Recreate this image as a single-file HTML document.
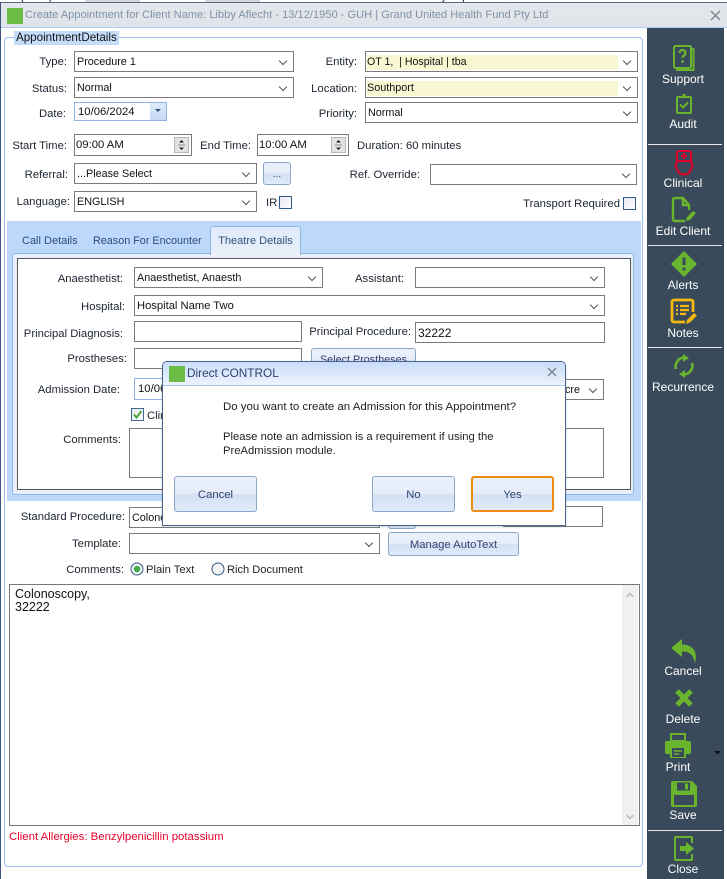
<!DOCTYPE html>
<html><head><meta charset="utf-8"><style>
html,body{margin:0;padding:0;background:#fff}
body{position:relative;width:727px;height:879px;overflow:hidden;font-family:"Liberation Sans",sans-serif;font-size:11.3px;color:#1c2430}
div,span{position:absolute;box-sizing:border-box;white-space:nowrap}
svg{position:absolute;overflow:visible}
.l{text-align:right;line-height:14px;height:14px;transform:translateY(1px)}
.t{line-height:14px;transform:translateY(1px)}
.f{border:1px solid #7a7a7a;background:#fff;line-height:21px;padding-left:2px;color:#111;font-size:10.8px}
.c::after{content:"";position:absolute;right:7px;top:6px;width:5px;height:5px;border-right:1px solid #555;border-bottom:1px solid #555;transform:rotate(45deg)}
.b{border:1px solid #8aa6c8;border-radius:3px;background:linear-gradient(#eaf1fb 0,#e6eefa 48%,#d3e1f4 52%,#dfeafa 100%);text-align:center;color:#33406f}
.s{width:80px;text-align:center;color:#fff;font-size:12px;line-height:14px;left:643px}
.sep{left:648px;width:74px;height:1px;background:#e8e8e8}
.y{background:#f9f7d2;position:absolute;left:1px;top:3px;height:15px;width:251px}
.cb{width:13px;height:13px;border:1px solid #2f5a8c;background:linear-gradient(135deg,#e6e9ee,#fff)}
</style></head><body>
<!-- behind window -->
<div style="left:0;top:0;width:727px;height:3px;background:#fff;overflow:hidden">
<span style="left:2px;top:-9px;font-size:11px;line-height:13px;color:#222">ate (2898)</span>
<span style="left:85px;top:0;width:55px;height:3px;background:#d8d8d8"></span>
<span style="left:205px;top:0;width:55px;height:3px;background:#d8d8d8"></span>
<span style="left:415px;top:-9px;font-size:11px;line-height:13px;color:#222">List by Lapsch / Client</span>
</div>
<div style="left:0;top:2px;width:1px;height:877px;background:#3f5580"></div>
<div style="left:1px;top:2px;width:726px;height:1px;background:#59698c"></div>
<!-- title -->
<div style="left:1px;top:3px;width:726px;height:25px;background:linear-gradient(#e4e8ec,#dfe4ea);border-bottom:1px solid #b4cdee"></div>
<div style="left:7px;top:8px;width:16px;height:16px;background:#6cbd45"></div>
<div style="left:25px;top:8px;color:#8092a8;font-size:11.1px;line-height:15px">Create Appointment for Client Name: Libby Aflecht - 13/12/1950 - GUH | Grand United Health Fund Pty Ltd</div>
<svg style="left:711px;top:11px" width="9" height="9"><path d="M0 0L9 9M9 0L0 9" stroke="#7f8790" stroke-width="1.5"/></svg>
<!-- group -->
<div style="left:4px;top:37px;width:639px;height:830px;border:1px solid #9cbfee;border-radius:4px"></div>
<div style="left:14px;top:31px;width:105px;height:14px;background:#c3dcfa;color:#111;line-height:14px;padding-left:2px;font-size:11.6px;word-spacing:-3px">Appointment Details</div>
<!-- left fields -->
<div class="l" style="right:660px;top:54px">Type:</div>
<div class="f c" style="left:74px;top:51px;width:220px;height:21px">Procedure 1</div>
<div class="l" style="right:660px;top:81px">Status:</div>
<div class="f c" style="left:74px;top:77px;width:220px;height:21px">Normal</div>
<div class="l" style="right:661px;top:106px">Date:</div>
<div class="f" style="left:74px;top:102px;width:93px;height:19px;border-color:#8db4e8;padding-left:3px;line-height:18px;font-size:11.3px">10/06/2024</div>
<div style="left:150px;top:103px;width:16px;height:17px;background:linear-gradient(#dfeafa,#c5d9f5)"></div>
<svg style="left:155px;top:109px" width="6" height="4"><path d="M0 0H6L3 3Z" fill="#33507c"/></svg>
<div class="l" style="right:660px;top:138px">Start Time:</div>
<div class="f" style="left:74px;top:134px;width:118px;height:22px;padding-left:1px;font-size:11.3px">09:00 AM</div>
<div style="left:174px;top:137px;width:15px;height:16px;background:#e3e3e3;border:1px solid #b8b8b8"></div>
<svg style="left:178px;top:139px" width="8" height="12"><path d="M1 3.500L3.500 1L6 3.500ZM1 8.500L3.500 11L6 8.500Z" fill="#222"/><path d="M0 6H7" stroke="#888"/></svg>
<div class="l" style="right:476px;top:138px">End Time:</div>
<div class="f" style="left:257px;top:134px;width:92px;height:22px;padding-left:1px;font-size:11.3px">10:00 AM</div>
<div style="left:331px;top:137px;width:15px;height:16px;background:#e3e3e3;border:1px solid #b8b8b8"></div>
<svg style="left:335px;top:139px" width="8" height="12"><path d="M1 3.500L3.500 1L6 3.500ZM1 8.500L3.500 11L6 8.500Z" fill="#222"/><path d="M0 6H7" stroke="#888"/></svg>
<div class="t" style="left:357px;top:138px">Duration: 60 minutes</div>
<div class="l" style="right:659px;top:167px">Referral:</div>
<div class="f c" style="left:74px;top:163px;width:183px;height:21px">...Please Select</div>
<div class="b" style="left:263px;top:162px;width:28px;height:23px;line-height:24px;font-size:10px">...</div>
<div class="l" style="right:657px;top:194px">Language:</div>
<div class="f c" style="left:74px;top:191px;width:183px;height:21px">ENGLISH</div>
<div class="t" style="left:266px;top:195px">IR</div>
<div class="cb" style="left:279px;top:196px"></div>
<!-- right fields -->
<div class="l" style="right:370px;top:54px">Entity:</div>
<div class="f c" style="left:365px;top:51px;width:273px;height:21px"><span class="y"></span><span style="left:1px;top:0;font-size:10.6px">OT 1,&nbsp; | Hospital | tba</span></div>
<div class="l" style="right:370px;top:81px">Location:</div>
<div class="f c" style="left:365px;top:77px;width:273px;height:21px"><span class="y"></span><span style="left:1px;top:0">Southport</span></div>
<div class="l" style="right:370px;top:106px">Priority:</div>
<div class="f c" style="left:365px;top:102px;width:273px;height:21px">Normal</div>
<div class="l" style="right:307px;top:167px">Ref. Override:</div>
<div class="f c" style="left:430px;top:164px;width:207px;height:21px"></div>
<div class="l" style="right:107px;top:196px">Transport Required</div>
<div class="cb" style="left:623px;top:197px"></div>
<!-- tab panel -->
<div style="left:7px;top:221px;width:634px;height:280px;background:#bcd9fb"></div>
<div class="t" style="left:22px;top:233px;color:#2f4a78;font-size:11px">Call Details</div>
<div class="t" style="left:93px;top:233px;color:#2f4a78;font-size:10.8px">Reason For Encounter</div>
<div style="left:12px;top:253px;width:622px;height:242px;background:#e9f0fa;border:1px solid #8fb4e6;border-radius:3px"></div>
<div style="left:210px;top:226px;width:91px;height:29px;background:linear-gradient(#dfeafa,#e9f0fa);border:1px solid #8fb4e6;border-bottom:none;border-radius:3px 3px 0 0;line-height:28px;text-align:center;color:#33507c;font-size:11px">Theatre Details</div>
<div style="left:17px;top:258px;width:614px;height:232px;background:#fff;border:1px solid #555"></div>
<!-- theatre -->
<div class="l" style="right:604px;top:271px">Anaesthetist:</div>
<div class="f c" style="left:134px;top:267px;width:189px;height:21px">Anaesthetist, Anaesth</div>
<div class="l" style="right:323px;top:271px">Assistant:</div>
<div class="f c" style="left:415px;top:267px;width:190px;height:21px"></div>
<div class="l" style="right:602px;top:299px">Hospital:</div>
<div class="f c" style="left:134px;top:295px;width:471px;height:21px;font-size:11.2px">Hospital Name Two</div>
<div class="l" style="right:604px;top:326px">Principal Diagnosis:</div>
<div class="f" style="left:134px;top:321px;width:168px;height:21px"></div>
<div class="l" style="right:316px;top:324px">Principal Procedure:</div>
<div class="f" style="left:415px;top:322px;width:190px;height:21px;padding-left:2px;font-size:12px">32222</div>
<div class="l" style="right:600px;top:351px">Prostheses:</div>
<div class="f" style="left:134px;top:348px;width:168px;height:21px"></div>
<div class="b" style="left:311px;top:348px;width:105px;height:24px;line-height:23px;font-size:10.8px">Select Prostheses</div>
<div class="l" style="right:607px;top:382px">Admission Date:</div>
<div class="f" style="left:134px;top:378px;width:120px;height:22px;border-color:#8db4e8;padding-left:3px;font-size:11.3px">10/06/2024</div>
<div class="f c" style="left:450px;top:379px;width:154px;height:21px"><span style="left:114px;top:0">cre</span></div>
<div class="cb" style="left:131px;top:408px;border-color:#3d6a8c"></div>
<svg style="left:133px;top:410px" width="10" height="9"><path d="M1 4.500L3.500 7.500L8.500 1" fill="none" stroke="#4aa83a" stroke-width="2"/></svg>
<div class="t" style="left:147px;top:408px">Clin</div>
<div class="l" style="right:606px;top:432px">Comments:</div>
<div class="f" style="left:129px;top:428px;width:475px;height:50px"></div>
<!-- lower -->
<div class="l" style="right:602px;top:509px">Standard Procedure:</div>
<div class="f" style="left:129px;top:507px;width:251px;height:21px">Colonoscopy</div>
<div class="b" style="left:388px;top:505px;width:28px;height:24px"></div>
<div class="f" style="left:503px;top:506px;width:100px;height:21px"></div>
<div class="l" style="right:606px;top:536px">Template:</div>
<div class="f c" style="left:129px;top:533px;width:251px;height:21px"></div>
<div class="b" style="left:388px;top:532px;width:131px;height:24px;line-height:25px">Manage AutoText</div>
<div class="l" style="right:603px;top:562px">Comments:</div>
<svg style="left:130px;top:562px" width="15" height="15"><circle cx="7" cy="7" r="6" fill="#f2f4f6" stroke="#34577f"/><circle cx="7" cy="7" r="3.200" fill="#3fae44"/></svg>
<div class="t" style="left:146px;top:562px;color:#222;font-size:11.2px">Plain Text</div>
<svg style="left:211px;top:562px" width="15" height="15"><circle cx="7" cy="7" r="6" fill="#f2f4f6" stroke="#34577f"/></svg>
<div class="t" style="left:227px;top:562px;color:#222;font-size:11.1px">Rich Document</div>
<div style="left:9px;top:584px;width:631px;height:242px;border:1px solid #777;background:#fff"></div>
<div style="left:15px;top:588px;line-height:13px;color:#111;font-size:12.5px">Colonoscopy,<br>32222</div>
<div style="left:622px;top:585px;width:16px;height:240px;background:#f0f0f0"></div>
<svg style="left:626px;top:592px" width="8" height="6"><path d="M0.500 5L4 1.500L7.500 5" fill="none" stroke="#bbb" stroke-width="1.500"/></svg>
<svg style="left:626px;top:814px" width="8" height="6"><path d="M0.500 1L4 4.500L7.500 1" fill="none" stroke="#bbb" stroke-width="1.500"/></svg>
<div style="left:9px;top:830px;line-height:14px;color:#e8002a;font-size:11.4px">Client Allergies: Benzylpenicillin potassium</div>
<!-- dialog -->
<div style="left:162px;top:361px;width:404px;height:165px;background:#fff;border:1px solid #4a648c;border-radius:5px 5px 0 0;box-shadow:0 1px 2px rgba(60,80,120,.25)"></div>
<div style="left:163px;top:362px;width:402px;height:24px;background:linear-gradient(#c8dcfa,#ecf3fd);border-bottom:1px solid #a9c5ec;border-radius:4px 4px 0 0"></div>
<div style="left:169px;top:366px;width:16px;height:16px;background:#6cbd45"></div>
<div style="left:187px;top:366px;line-height:15px;color:#33406f;font-size:11.8px">Direct CONTROL</div>
<svg style="left:548px;top:368px" width="8" height="8"><path d="M0 0L8 8M8 0L0 8" stroke="#7f8790" stroke-width="1.500"/></svg>
<div style="left:223px;top:400px;line-height:14px;color:#222;font-size:11.45px">Do you want to create an Admission for this Appointment?</div>
<div style="left:223px;top:430px;line-height:14px;color:#222;font-size:11.27px">Please note an admission is a requirement if using the<br>PreAdmission module.</div>
<div class="b" style="left:174px;top:476px;width:83px;height:36px;line-height:36px">Cancel</div>
<div class="b" style="left:372px;top:476px;width:83px;height:36px;line-height:36px">No</div>
<div class="b" style="left:471px;top:476px;width:83px;height:36px;line-height:34px;border:2px solid #f08a10;color:#33406f">Yes</div>
<!-- sidebar -->
<div style="left:647px;top:28px;width:77px;height:851px;background:#394b5b"></div>
<div class="sep" style="top:144px"></div><div class="sep" style="top:245px"></div><div class="sep" style="top:347px"></div><div class="sep" style="top:830px"></div>
<svg style="left:673px;top:45px" width="22" height="26" fill="none" stroke="#6ab42e" stroke-width="2"><path d="M19 4h1.500v21H4v-1"/><rect x="1" y="1" width="17" height="22" rx="1.500"/><path d="M6.500 8c0-4 6-4 6 0 0 2.500-3 2.500-3 5M9.500 15v3" stroke-width="2.200"/></svg>
<div class="s" style="top:72px">Support</div>
<svg style="left:676px;top:94px" width="16" height="20" fill="none" stroke="#6ab42e" stroke-width="2"><rect x="1" y="3" width="14" height="16" rx="1"/><path d="M8 0v3" stroke-width="3"/><path d="M4 10.500l3 3 5-5"/></svg>
<div class="s" style="top:117px">Audit</div>
<svg style="left:674px;top:150px" width="20" height="26" fill="none" stroke="#e4002b" stroke-width="2"><path d="M3 11V3.500Q3 1 5.500 1h9Q17 1 17 3.500V11H3M3 11L1.500 15.500L5 23Q10 26 15 23L18.500 15.500L17 11"/><path d="M10 3v6M7 6h6" stroke-width="2"/></svg>
<div class="s" style="top:176px">Clinical</div>
<svg style="left:671px;top:197px" width="26" height="26" fill="none" stroke="#6ab42e" stroke-width="2.400"><path d="M14 24H4Q2 24 2 22V3Q2 1 4 1H12L18 8V13M12 1V8H18"/><path d="M15 24l1-4 6-6 3 2-6 7z" fill="#6ab42e" stroke="none"/></svg>
<div class="s" style="top:224px">Edit Client</div>
<svg style="left:671px;top:251px" width="26" height="26"><path d="M13 0L26 13L13 26L0 13Z" fill="#6ab42e"/><path d="M13 6.500V14M13 16.500v3" stroke="#394b5b" stroke-width="3"/></svg>
<div class="s" style="top:278px">Alerts</div>
<svg style="left:671px;top:299px" width="26" height="26" fill="none" stroke="#f3b912" stroke-width="2.800"><path d="M14 23H3Q1 23 1 21V3Q1 1 3 1H20Q22 1 22 3V13"/><path d="M5 7h2M9 7h9M5 11h2M9 11h9M5 15h2M9 15h6" stroke-width="2.200"/><path d="M15 25l1-4 7-7 3 2.500-7 7z" fill="#f3b912" stroke="none"/></svg>
<div class="s" style="top:326px">Notes</div>
<svg style="left:673px;top:354px" width="22" height="24" fill="none" stroke="#6ab42e" stroke-width="2.600"><path d="M3 15A9 9 0 0 1 11 3.500M19 9A9 9 0 0 1 11 20.500"/><path d="M10 0L16 4L10 8Z M12 16L6 20L12 24Z" fill="#6ab42e" stroke="none"/></svg>
<div class="s" style="top:380px">Recurrence</div>
<svg style="left:671px;top:639px" width="27" height="24"><path d="M11 0L0 9L11 18V12.500C18 12.500 22 15 24 24C27 13 22 5.500 11 5.500Z" fill="#6ab42e"/></svg>
<div class="s" style="top:664px">Cancel</div>
<svg style="left:675px;top:689px" width="18" height="18"><path d="M2 2L16 16M16 2L2 16" stroke="#6ab42e" stroke-width="5"/></svg>
<div class="s" style="top:712px">Delete</div>
<svg style="left:665px;top:733px" width="26" height="26"><path d="M6 1H20V8H6Z" fill="none" stroke="#6ab42e" stroke-width="2"/><path d="M2 8H24Q26 8 26 10V19Q26 21 24 21H21V25H5V21H2Q0 21 0 19V10Q0 8 2 8Z" fill="#6ab42e"/><rect x="7" y="15" width="12" height="9" fill="#394b5b"/><path d="M9 18H17M9 21H14" stroke="#6ab42e" stroke-width="1.500"/></svg>
<div class="s" style="top:760px;left:638px">Print</div>
<svg style="left:714px;top:751px" width="7" height="4"><path d="M0 0H7L3.500 3.500Z" fill="#111"/></svg>
<svg style="left:671px;top:781px" width="26" height="26"><path d="M2 0H21L26 5V24Q26 26 24 26H2Q0 26 0 24V2Q0 0 2 0Z" fill="#6ab42e"/><rect x="3" y="14" width="20" height="10" fill="#394b5b"/><rect x="6" y="1.500" width="13" height="8" fill="#394b5b"/><rect x="14" y="2.500" width="3" height="6" fill="#6ab42e"/></svg>
<div class="s" style="top:808px">Save</div>
<svg style="left:674px;top:836px" width="20" height="25" fill="none" stroke="#6ab42e" stroke-width="2"><path d="M18 7V2Q18 1 17 1H2Q1 1 1 2V23Q1 24 2 24H17Q18 24 18 23V18"/><path d="M6 10H12V6L20 12.500L12 19V15H6Z" fill="#6ab42e" stroke="none"/></svg>
<div class="s" style="top:862px">Close</div>
</body></html>
